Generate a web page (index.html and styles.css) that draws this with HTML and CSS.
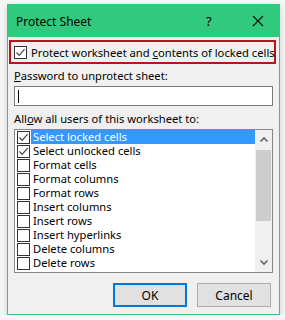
FILE: index.html
```html
<!DOCTYPE html>
<html lang="en">
<head>
  <meta charset="UTF-8"/>
  <title>Protect Sheet</title>
  <link rel="stylesheet" href="styles.css">
</head>
<body>
  <div class="dialog">
    <div class="titlebar">
      <span class="title">Protect Sheet</span>
      <span class="help">?</span>
      <svg class="close" width="12" height="12" viewBox="0 0 12 12"><path d="M1 1 L11 11 M11 1 L1 11" stroke="#111" stroke-width="1.1"/></svg>
    </div>

    <div class="content">
      <div class="protect">
        <span class="cb checked"><svg width="11" height="11" viewBox="0 0 11 11"><path d="M1.5 5.5 L4.2 8.3 L9.6 2.2" fill="none" stroke="#444" stroke-width="1.2"/></svg></span>
        <span>Protect worksheet and <u>c</u>ontents of locked cells</span>
      </div>

      <label class="lbl"><u>P</u>assword to unprotect sheet:</label>
      <div class="input"><span class="caret"></span></div>

      <label class="lbl allow">All<u>o</u>w all users of this worksheet to:</label>
      <div class="listbox">
        <ul class="items">
          <li class="sel"><span class="cb checked"><svg width="11" height="11" viewBox="0 0 11 11"><path d="M1.5 5.5 L4.2 8.3 L9.6 2.2" fill="none" stroke="#444" stroke-width="1.2"/></svg></span><span class="txt">Select locked cells</span></li>
          <li><span class="cb checked"><svg width="11" height="11" viewBox="0 0 11 11"><path d="M1.5 5.5 L4.2 8.3 L9.6 2.2" fill="none" stroke="#444" stroke-width="1.2"/></svg></span><span class="txt">Select unlocked cells</span></li>
          <li><span class="cb"></span><span class="txt">Format cells</span></li>
          <li><span class="cb"></span><span class="txt">Format columns</span></li>
          <li><span class="cb"></span><span class="txt">Format rows</span></li>
          <li><span class="cb"></span><span class="txt">Insert columns</span></li>
          <li><span class="cb"></span><span class="txt">Insert rows</span></li>
          <li><span class="cb"></span><span class="txt">Insert hyperlinks</span></li>
          <li><span class="cb"></span><span class="txt">Delete columns</span></li>
          <li><span class="cb"></span><span class="txt">Delete rows</span></li>
        </ul>
        <div class="scrollbar">
          <svg width="16" height="16" viewBox="0 0 16 16"><path d="M4.5 9.5 L8 6 L11.5 9.5" fill="none" stroke="#606060" stroke-width="1.6"/></svg>
          <div class="track"><div class="thumb"></div></div>
          <svg width="16" height="16" viewBox="0 0 16 16"><path d="M4.5 6.5 L8 10 L11.5 6.5" fill="none" stroke="#606060" stroke-width="1.6"/></svg>
        </div>
      </div>

      <div class="buttons">
        <button class="btn ok">OK</button>
        <button class="btn">Cancel</button>
      </div>
    </div>
  </div>
</body>
</html>
```

FILE: styles.css
```css
body{margin:0;background:#f7f7f7;font-family:"Noto Sans","Open Sans",sans-serif;font-size:11.2px;color:#000;}
.dialog{width:271px;height:309px;margin:4px 0 0 7px;border:1px solid #31c97e;background:#f0f0f0;box-shadow:0 2px 6px rgba(0,0,0,.18);display:flex;flex-direction:column;}
.titlebar{height:32px;background:#31c97e;display:flex;align-items:center;padding-left:8px;}
.title{flex:1;font-size:12px;}
.help{width:14px;margin-right:32px;font-size:13px;}
.close{margin-right:15px;}
.content{padding:3px 3px 0 1px;display:flex;flex-direction:column;}
.protect{height:20px;border:2px solid #b8141c;display:flex;align-items:center;padding-left:3px;gap:4px;white-space:nowrap;}
u{text-decoration:underline;text-underline-offset:1px;}
.cb{width:11px;height:11px;border:1px solid #333;background:#fff;display:inline-flex;flex:none;}
.lbl{display:block;margin:4px 0 0 5px;height:16px;line-height:16px;}
.input{margin:2px 0 0 5px;width:257px;height:18px;border:1px solid #7a7a7a;background:#fff;display:flex;align-items:center;}
.caret{width:1px;height:13px;background:#000;margin-left:3px;}
.lbl.allow{margin-top:5px;}
.listbox{margin:2px 0 0 5px;width:257px;height:142px;border:1px solid #828790;background:#fff;display:flex;}
.items{list-style:none;margin:0;padding:0;flex:1;}
.items li{height:14px;line-height:14px;display:flex;align-items:center;padding-left:2px;white-space:nowrap;}
.items .cb{margin-right:1px;}
.txt{height:14px;line-height:14px;padding:0 2px;flex:1;}
.sel .txt{background:#3399ff;color:#fff;}
.scrollbar{width:17px;background:#f0f0f0;display:flex;flex-direction:column;align-items:center;}
.scrollbar svg{flex:none;margin:2px 0;}
.track{flex:1;width:15px;}
.thumb{height:71px;background:#cdcdcd;margin-top:0;}
.buttons{display:flex;justify-content:flex-end;gap:10px;margin:10px 5px 0 0;}
.btn{width:74px;height:24px;background:#e1e1e1;border:1px solid #adadad;font-family:inherit;font-size:12px;padding:0;}
.btn.ok{border:2px solid #0078d7;}
```
